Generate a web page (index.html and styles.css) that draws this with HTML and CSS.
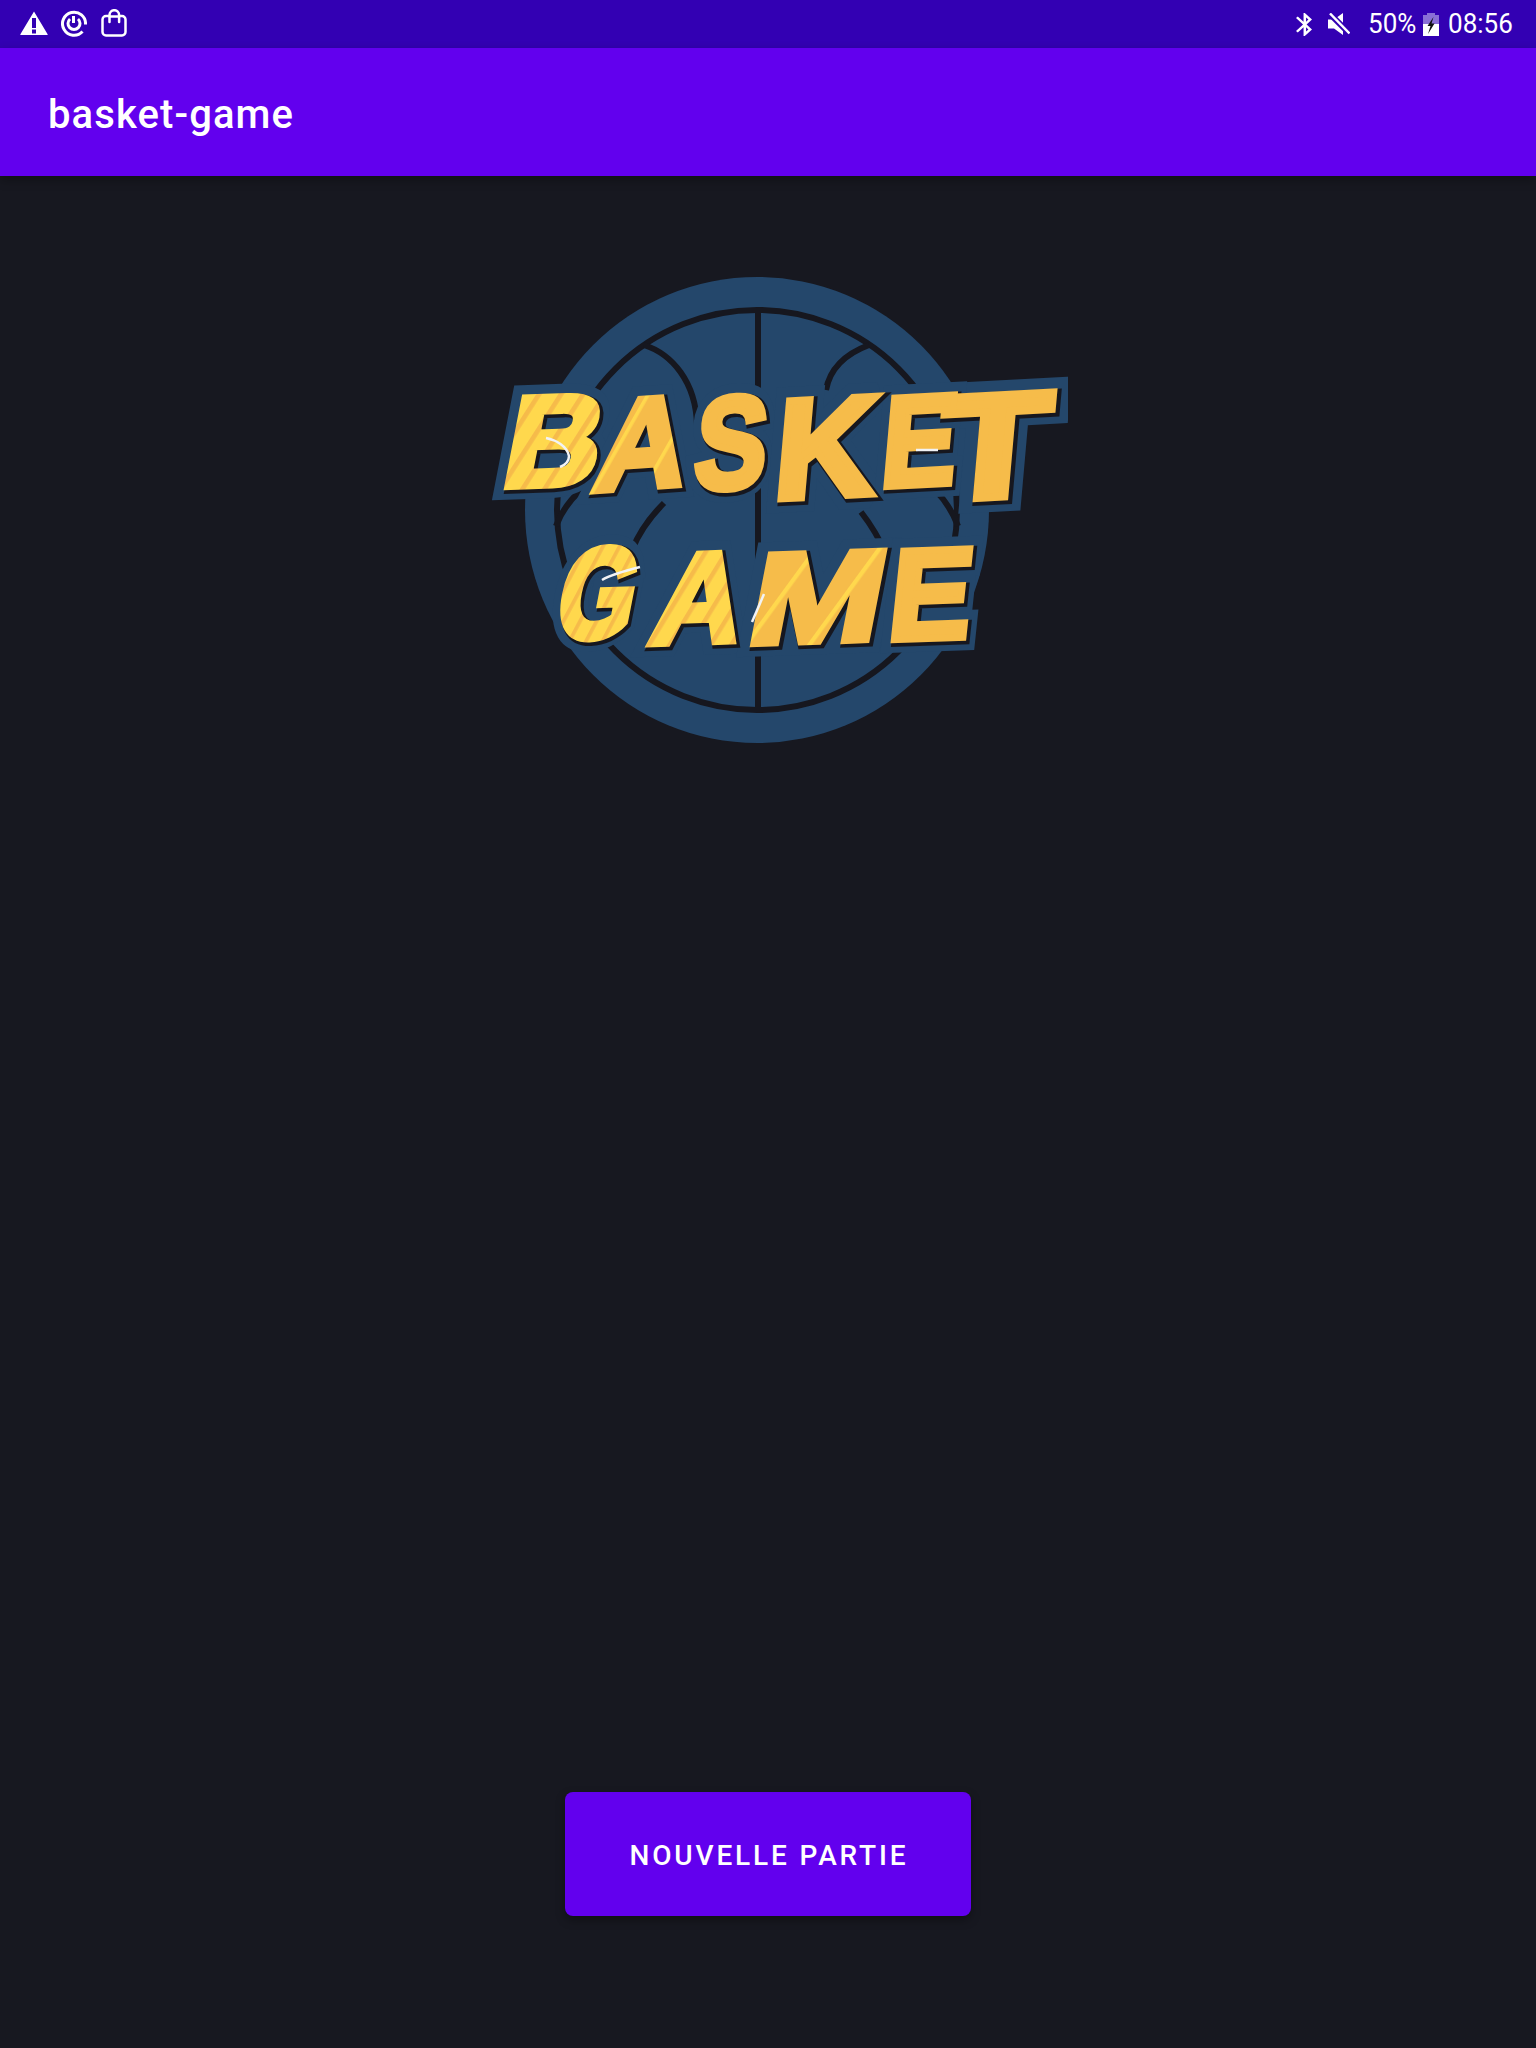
FILE: index.html
```html
<!DOCTYPE html>
<html lang="fr">
<head>
<meta charset="utf-8">
<title>basket-game</title>
<link rel="stylesheet" href="styles.css">
</head>
<body>
<div class="status">
  <div class="status-left">
    <svg class="ic-warn" viewBox="0 0 28 24"><path class="w" d="M14 0.5 27.6 23.2a.5.5 0 0 1-.4.8H.8a.5.5 0 0 1-.4-.8Z"/><path class="b" d="M12 7h4v10h-4zM12 18.500h4v4h-4z"/></svg>
    <svg class="ic-ring" viewBox="0 0 26 28"><path class="l3" d="M24.500 15.500A11.500 11.500 0 1 0 21.500 22.500"/><path class="l3" d="M9 10A6 6 0 1 0 17 10"/><path class="l3" d="M12.500 7V14"/></svg>
    <svg class="ic-bag" viewBox="0 0 26 28"><path class="l25" d="M8 7H5a3.500 3.500 0 0 0-3.500 3.500V23A3.500 3.500 0 0 0 5 26.500H21A3.500 3.500 0 0 0 24.500 23V10.500A3.500 3.500 0 0 0 21 7H18.500"/><path class="l25" d="M8.500 13V6a4.800 4.800 0 0 1 9.600 0V13"/><path class="l25" d="M8.500 7.500h9.600"/></svg>
  </div>
  <div class="status-right">
    <svg class="ic-bt" viewBox="5 2 12.710 20" preserveAspectRatio="none"><path class="w" d="M17.710 7.710 12 2h-1v7.590L6.410 5 5 6.410 10.590 12 5 17.590 6.410 19 11 14.410V22h1l5.710-5.710-4.300-4.290 4.300-4.290zM13 5.830l1.880 1.880L13 9.590V5.830zm1.880 10.460L13 18.170v-3.760l1.880 1.880z"/></svg>
    <svg class="ic-mute" viewBox="0 0 22 22"><path class="w" d="M0 6.500H6L15 0V22L6 15.500H0Z"/><path class="cut" d="M2 1 22 21"/><path class="slash" d="M2 0.500 21.500 20.500"/></svg>
    <span class="pct">50%</span>
    <svg class="ic-batt" viewBox="0 0 16 23"><path class="dim" d="M4 0h8v2h4v10H0V2h4z"/><path class="w" d="M0 11h16v12H0z"/><path class="k" d="M10.500 4 4.500 13H7.500L5 21 11.500 10.500H8.500Z"/></svg>
    <span class="clock">08:56</span>
  </div>
</div>
<header class="appbar"><h1 class="title">basket-game</h1></header>
<main class="content">
  <svg class="logo" viewBox="468 270 600 480" role="img" aria-label="Basket Game">
    <defs>
      <pattern id="stripes" patternUnits="userSpaceOnUse" width="20" height="20" patternTransform="rotate(24)">
        <rect class="st-a" width="20" height="20"/>
        <rect class="st-b" width="5" height="20"/>
      </pattern>
      <pattern id="stripes2" patternUnits="userSpaceOnUse" width="48" height="48" patternTransform="rotate(24)">
        <rect class="st-c" width="48" height="48"/>
        <rect class="st-a" width="4" height="48"/>
      </pattern>
      <g id="w1">
        <text class="ltr" transform="translate(499 487) rotate(-2) skewX(-13) scale(1.03 1)">B</text>
      </g>
      <g id="w1b">
        <text class="ltr" transform="translate(591 491) rotate(-4) skewX(-13) scale(.98 1)">A</text>
      </g>
      <g id="w2">
        <text class="ltr" transform="translate(692 490) rotate(-3) skewX(-8) scale(.84 1.02)">S</text>
        <text class="ltr" transform="translate(772 499) rotate(-3) skewX(-8) scale(1.085 1.1)">K</text>
        <text class="ltr" transform="translate(936 500) rotate(-3) skewX(-8) scale(1.4 1.15)">T</text>
        <text class="ltr" transform="translate(879 487) rotate(-3) skewX(-8) scale(.875 1)">E</text>
      </g>
      <g id="g1">
        <text class="ltr" transform="translate(552 639) rotate(-2) skewX(-13) scale(.77 1)">G</text>
        <text class="ltr" transform="translate(647 644) rotate(-2) skewX(-13) scale(.96 1)">A</text>
      </g>
      <g id="g2">
        <text class="ltr" transform="translate(744 644) rotate(-2) skewX(-13) scale(1.24 1)">M</text>
      </g>
      <g id="g3">
        <text class="ltr" transform="translate(886 640) rotate(-2) skewX(-8) scale(.96 1)">E</text>
      </g>
      <g id="all">
        <use href="#w1"/><use href="#w1b"/><use href="#w2"/><use href="#g1"/><use href="#g2"/><use href="#g3"/>
      </g>
    </defs>
    <ellipse class="ball" cx="757" cy="510" rx="232" ry="233"/>
    <circle class="seam" cx="757" cy="510" r="200"/>
    <path class="seam" d="M758 310V710"/>
    <path class="seam" d="M644 345C672 354 696 382 697 425"/>
    <path class="seam" d="M869 345C845 354 830 368 826 390"/>
    <path class="seam" d="M664 503C650 517 640 530 632 550"/>
    <path class="seam" d="M861 512C872 526 880 540 887 556"/>
    <path class="seam" d="M581 490C570 500 562 510 556 526"/>
    <path class="seam" d="M935 490C945 500 952 510 958 526"/>
    <use href="#all" class="plate"/>
    <use href="#all" class="shade"/>
    <use href="#w1" class="fill-a"/>
    <use href="#w1b" class="fill-c"/>
    <use href="#w2" class="fill-b"/>
    <use href="#g1" class="fill-a"/>
    <use href="#g2" class="fill-c"/>
    <use href="#g3" class="fill-b"/>
    <path class="glint" d="M546 438C556 440 567 446 569 456 569 461 565 465 560 467"/>
    <path class="glint" d="M916 450H938"/>
    <path class="glint" d="M752 622 764 594"/>
    <path class="glint" d="M602 580C612 574 628 570 640 567"/>
  </svg>
  <button class="btn" type="button">NOUVELLE PARTIE</button>
</main>
</body>
</html>
```
FILE: styles.css
```css
html, body { margin: 0; padding: 0; }
body {
  width: 1536px;
  height: 2048px;
  display: flex;
  flex-direction: column;
  background: #171820;
  font-family: Roboto, "Liberation Sans", sans-serif;
  color: #fff;
  overflow: hidden;
}
.status {
  height: 48px;
  flex: none;
  background: #3300b3;
  display: flex;
  align-items: center;
  justify-content: space-between;
  padding: 0 24px 0 20px;
}
.status-left, .status-right { display: flex; align-items: center; }
.status svg { display: block; flex: none; }
.w { fill: #fff; }
.b { fill: #3300b3; }
.k { fill: #111; }
.dim { fill: #8a6fd6; }
.l3, .l25, .slash, .cut { fill: none; stroke: #fff; }
.l3 { stroke-width: 3; }
.l25 { stroke-width: 2.500; stroke-linecap: round; }
.slash { stroke-width: 2.500; }
.cut { stroke: #3300b3; stroke-width: 6; }
.ic-warn { width: 28px; height: 24px; margin-top: -2px; }
.ic-ring { width: 26px; height: 28px; margin-left: 13px; margin-top: -2px; }
.ic-bag { width: 26px; height: 28px; margin-left: 14px; margin-top: -3px; }
.ic-bt { width: 16px; height: 23px; }
.ic-mute { width: 22px; height: 22px; margin-left: 16px; margin-top: -1px; }
.ic-batt { width: 16px; height: 23px; margin-left: 7px; }
.pct, .clock {
  display: block;
  font-size: 28px;
  line-height: 32px;
  white-space: nowrap;
  transform-origin: left center;
}
.pct { width: 48px; margin-left: 18px; transform: scaleX(.93); }
.clock { width: 64px; margin-left: 9px; transform: scaleX(.93); }
.appbar {
  height: 128px;
  flex: none;
  box-sizing: border-box;
  background: #6200ee;
  padding: 0 48px;
  display: flex;
  align-items: center;
  box-shadow: 0 4px 10px rgba(0, 0, 0, .3);
  position: relative;
}
.title {
  margin: 6px 0 0;
  font-size: 40px;
  font-weight: 500;
  letter-spacing: 1.100px;
  line-height: 56px;
}
.content {
  flex: 1;
  display: flex;
  flex-direction: column;
  align-items: center;
  padding-top: 94px;
  padding-bottom: 132px;
}
.logo { width: 600px; height: 480px; display: block; flex: none; }
.ball { fill: #24476b; }
.seam { fill: none; stroke: #16171f; stroke-width: 6px; }
.ltr {
  font-family: "Liberation Sans", Arial, sans-serif;
  font-weight: 700;
  font-size: 128px;
}
.plate { fill: #24476b; stroke: #24476b; stroke-width: 26px; stroke-linejoin: miter; stroke-miterlimit: 2; }
.shade { fill: #16171f; stroke: #16171f; stroke-width: 10px; stroke-linejoin: miter; stroke-miterlimit: 3; transform: translate(2px, 2px); }
.fill-a { fill: url(#stripes); stroke: url(#stripes); stroke-width: 7px; stroke-linejoin: miter; stroke-miterlimit: 3; }
.fill-b { fill: #f6bc4a; stroke: #f6bc4a; stroke-width: 7px; stroke-linejoin: miter; stroke-miterlimit: 3; }
.fill-c { fill: url(#stripes2); stroke: url(#stripes2); stroke-width: 7px; stroke-linejoin: miter; stroke-miterlimit: 3; }
.glint { fill: none; stroke: #f2f3f5; stroke-width: 2.500px; }
.st-a { fill: #ffd84d; }
.st-b { fill: #f6bb4a; }
.st-c { fill: #f6bc4a; }
.btn {
  margin-top: auto;
  width: 406px;
  height: 124px;
  flex: none;
  border: 0;
  border-radius: 8px;
  background: #6200ee;
  color: #fff;
  font-family: Roboto, "Liberation Sans", sans-serif;
  font-size: 28px;
  font-weight: 500;
  letter-spacing: 2.850px;
  padding: 2px 0 0 2px;
  box-shadow: 0 4px 10px rgba(0, 0, 0, .35);
}
```
